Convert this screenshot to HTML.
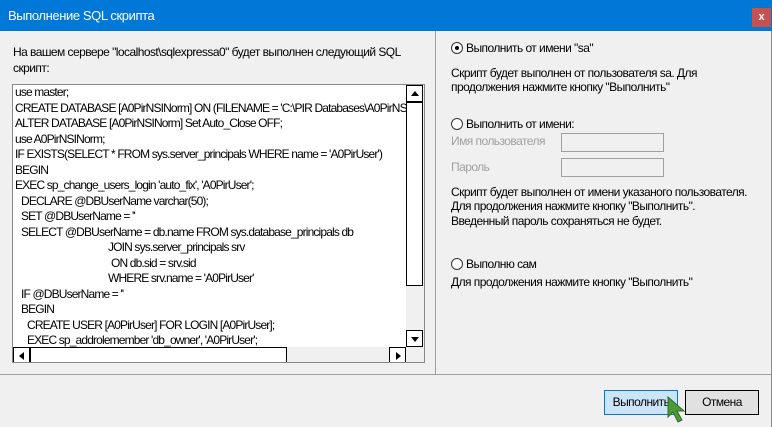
<!DOCTYPE html>
<html><head><meta charset="utf-8"><style>
*{margin:0;padding:0;box-sizing:border-box}
body{width:772px;height:427px;background:#f0f0f0;font-family:"Liberation Sans",sans-serif;font-size:12px;letter-spacing:-0.55px;color:#000;position:relative;overflow:hidden}
.abs{position:absolute}
#title{left:0;top:0;width:772px;height:31px;background:#0078d7;color:#fff;font-size:13px;letter-spacing:-0.4px;line-height:31px;padding-left:8px}
#close{left:752px;top:8px;width:19px;height:19px;background:#c75050;color:#fff;font-size:11px;font-weight:bold;text-align:center;line-height:18px;letter-spacing:0}
.t{white-space:nowrap}
#ta{left:12px;top:84px;width:413px;height:279px;border:1px solid #828790;background:#fff;overflow:hidden}
#code{left:2px;top:0;line-height:15.5px;font-size:12px;letter-spacing:-0.85px;white-space:pre}
#code span{display:inline-block}
.sb{background:#f0f0f0}
.btn{border:1px solid #000;background:#fff}
.tri{width:0;height:0;position:absolute}
.gray{color:#a0a0a0}
.inp{border:1px solid #a0a0a0;width:103px;height:19px;background:#f0f0f0}
.radio{width:12px;height:12px;border:1px solid #333;border-radius:50%;background:#fff}
</style></head><body>
<div id="title" class="abs">Выполнение SQL скрипта</div>
<div id="close" class="abs">x</div>
<div class="abs" style="left:771px;top:31px;width:1px;height:396px;background:#888"></div>

<div class="abs t" style="left:13px;top:44px;line-height:16px">На вашем сервере "localhost\sqlexpressa0" будет выполнен следующий SQL<br>скрипт:</div>

<div id="ta" class="abs">
<div id="code" class="abs">use master;
CREATE DATABASE [A0PirNSINorm] ON (FILENAME = 'C:\PIR Databases\A0PirNSINorm.mdf')
ALTER DATABASE [A0PirNSINorm] Set Auto_Close OFF;
use A0PirNSINorm;
IF EXISTS(SELECT * FROM sys.server_principals WHERE name = 'A0PirUser')
BEGIN
EXEC sp_change_users_login 'auto_fix', 'A0PirUser';
<span style="margin-left:6px">DECLARE @DBUserName varchar(50);</span>
<span style="margin-left:6px">SET @DBUserName = ''</span>
<span style="margin-left:6px">SELECT @DBUserName = db.name FROM sys.database_principals db</span>
<span style="margin-left:93px">JOIN sys.server_principals srv</span>
<span style="margin-left:96px">ON db.sid = srv.sid</span>
<span style="margin-left:93px">WHERE srv.name = 'A0PirUser'</span>
<span style="margin-left:6px">IF @DBUserName = ''</span>
<span style="margin-left:6px">BEGIN</span>
<span style="margin-left:12px">CREATE USER [A0PirUser] FOR LOGIN [A0PirUser];</span>
<span style="margin-left:12px">EXEC sp_addrolemember 'db_owner', 'A0PirUser';</span>
<span style="margin-left:6px">END;</span>
<span style="margin-left:6px">IF @DBUserName = 'A0PirUser'</span>
<span style="margin-left:12px">EXEC sp_addrolemember 'db_owner', 'A0PirUser';</span></div>
<div class="abs sb" style="left:393px;top:0;width:18px;height:277px"></div>
<div class="abs btn" style="left:393px;top:0;width:17px;height:17px"><div class="tri" style="left:4px;top:5px;border-left:4px solid transparent;border-right:4px solid transparent;border-bottom:5px solid #000"></div></div>
<div class="abs btn" style="left:393px;top:17px;width:17px;height:184px"></div>
<div class="abs btn" style="left:393px;top:245px;width:17px;height:17px"><div class="tri" style="left:4px;top:6px;border-left:4px solid transparent;border-right:4px solid transparent;border-top:5px solid #000"></div></div>
<div class="abs sb" style="left:0;top:262px;width:411px;height:16px"></div>
<div class="abs btn" style="left:0;top:262px;width:17px;height:16px"><div class="tri" style="left:5px;top:4px;border-top:4px solid transparent;border-bottom:4px solid transparent;border-right:5px solid #000"></div></div>
<div class="abs btn" style="left:17px;top:262px;width:257px;height:16px"></div>
<div class="abs btn" style="left:376px;top:262px;width:17px;height:16px"><div class="tri" style="left:6px;top:4px;border-top:4px solid transparent;border-bottom:4px solid transparent;border-left:5px solid #000"></div></div>
</div>

<div class="abs" style="left:435px;top:31px;width:1px;height:343px;background:#a0a0a0"></div>
<div class="abs" style="left:0;top:374px;width:771px;height:1px;background:#a0a0a0"></div>

<div class="abs radio" style="left:451px;top:42px"><div class="abs" style="left:3px;top:3px;width:4px;height:4px;border-radius:50%;background:#000"></div></div>
<div class="abs t" style="left:466px;top:41px">Выполнить от имени "sa"</div>
<div class="abs t" style="left:451px;top:66px;line-height:14px">Скрипт будет выполнен от пользователя sa. Для<br>продолжения нажмите кнопку "Выполнить"</div>

<div class="abs radio" style="left:451px;top:118px"></div>
<div class="abs t" style="left:466px;top:117px">Выполнить от имени:</div>
<div class="abs t gray" style="left:451px;top:134px">Имя пользователя</div>
<div class="abs inp" style="left:561px;top:133px"></div>
<div class="abs t gray" style="left:451px;top:160px">Пароль</div>
<div class="abs inp" style="left:561px;top:158px"></div>
<div class="abs t" style="left:451px;top:185px;line-height:14px">Скрипт будет выполнен от имени указаного пользователя.<br>Для продолжения нажмите кнопку "Выполнить".</div>
<div class="abs t" style="left:451px;top:214px">Введенный пароль сохраняться не будет.</div>

<div class="abs radio" style="left:451px;top:258px"></div>
<div class="abs t" style="left:466px;top:257px">Выполню сам</div>
<div class="abs t" style="left:451px;top:275px">Для продолжения нажмите кнопку "Выполнить"</div>

<div class="abs" style="left:604px;top:390px;width:74px;height:25px;background:#cce4f7;border:1px solid #0078d7;text-align:center;line-height:23px">Выполнить</div>
<div class="abs" style="left:685px;top:390px;width:74px;height:25px;background:#e1e1e1;border:1px solid #000;text-align:center;line-height:23px">Отмена</div>
<svg class="abs" style="left:665px;top:395px" width="26" height="32" viewBox="0 0 26 32"><path d="M3 2 L3 22 L8 17 L13 27 L17 25 L12 16 L19 16 Z" fill="#4c9a3a" stroke="#2d6b22" stroke-width="1"/></svg>
</body></html>
